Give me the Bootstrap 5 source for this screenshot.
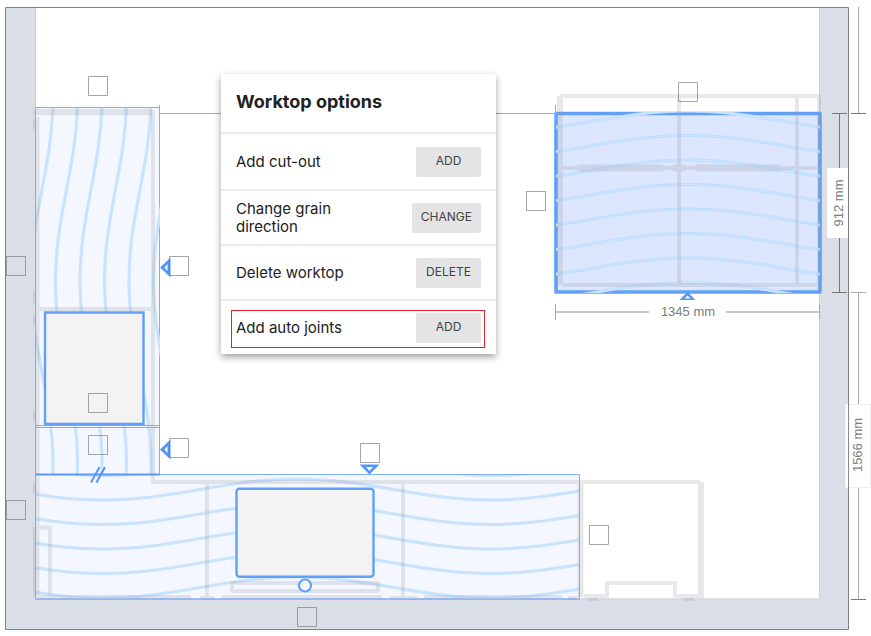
<!DOCTYPE html>
<html lang="en">
<head>
<meta charset="utf-8">
<meta name="viewport" content="width=device-width, initial-scale=1">
<title>Worktop planner</title>
<link rel="stylesheet" href="https://cdn.jsdelivr.net/npm/bootstrap@5.3.0/dist/css/bootstrap.min.css">
<style>
  body { background: #fff; font-family: Inter, "Open Sans", sans-serif; }
  .options-panel { left: 221px; top: 74px; width: 275px; border-radius: 0; box-shadow: 0 3px 7px rgba(0,0,0,.38); color: #212121; }
  .panel-title { font-size: 18px; line-height: 24px; font-weight: 700; padding: 16px 15px 18px; }
  .option-row { border-top: 2px solid #ececec; min-height: 55px; padding: 8px 15px; font-size: 15px; line-height: 18px; }
  .option-row label { max-width: 140px; }
  .option-first { min-height: 57px; }
  .option-marked { padding: 9px 11px 6px 10px; }
  .marked-box { border: 1px solid #e8202c; padding: 2px 3px 4px 4px; }
  .btn-option { background: #e4e4e4; color: #424242; font-size: 12px; line-height: 18px; min-width: 65px; padding: 5px 9px 7px; border: 0; border-radius: 2px; }
  .btn-option:hover { background: #d8d8d8; }
  .plan text { font-family: "Liberation Sans", Arial, sans-serif; font-size: 13px; fill: #7c7c7c; text-anchor: middle; }
  .unit { fill: none; stroke: #969696; stroke-width: 4; stroke-linejoin: round; }
  .top-edge { fill: none; stroke: #82acf7; }
  .grain { fill: none; stroke: #c9e3ff; stroke-width: 3.2; }
  .dim { fill: none; stroke: #aaa; }
  .grip { fill: none; stroke: #777; stroke-opacity: .65; }
  .cutout { fill: #f3f3f3; stroke: #62a0f7; stroke-width: 2.4; }
</style>
</head>
<body>
<main class="position-relative">
  <svg class="plan d-block w-100 h-auto" viewBox="0 0 871 636" role="img" aria-label="Kitchen floor plan">
    <defs>
      <clipPath id="clipLeft"><path d="M36 108H160V474H36z"/></clipPath>
      <clipPath id="clipBase"><path d="M36 475H580V599H36z"/></clipPath>
      <clipPath id="clipIsland"><path d="M556 112H820V293H556z"/></clipPath>
      <path id="waveV" d="M77.5 98C77.5 165 55.5 214 55.5 281S77.5 397 77.5 464S55.5 580 55.5 647"/>
      <path id="waveH" d="M-91 479C-20 479 32 500 103 500S226 479 297 479S421 500 491 500S615 479 685 479"/>
      <path id="waveI" d="M494 156.500C565 156.500 617 135.500 688 135.500S811 156.500 882 156.500"/>
      <g id="islandWaves">
        <use href="#waveI" y="-24.500"/><use href="#waveI"/><use href="#waveI" y="24.500"/><use href="#waveI" y="49"/><use href="#waveI" y="73.500"/><use href="#waveI" y="98"/><use href="#waveI" y="122.500"/><use href="#waveI" y="147"/>
      </g>
      <path id="grip" class="grip" d="M.5 .5H19.500V19.500H.5z"/>
      <g id="arrow"><path d="M0 10L10.500 0V20z" fill="#5596f5"/><path d="M4.500 10L7.500 6.500V13.500z" fill="#fff"/></g>
    </defs>

    <!-- walls -->
    <path d="M5.500 7.500H848.500V629.500H5.500z" fill="#dadfe7"/>
    <path d="M36 8H819V598.500H36z" fill="#fff"/>
    <path d="M35.500 8V599H819.500V8" fill="none" stroke="#cfd2d6"/>

    <!-- worktops -->
    <path class="top-edge" d="M35.500 107.500H159.500V474.500H35.500z" style="fill:#f4f7ff"/>
    <path class="top-edge" d="M35.500 474.500H579.500V599H35.500z" style="fill:#f4f7ff"/>
    <path d="M556 113.500H820V292H556z" fill="#dce6ff"/>

    <g class="grain" clip-path="url(#clipLeft)">
      <use href="#waveV" x="-49"/><use href="#waveV" x="-24.500"/><use href="#waveV"/><use href="#waveV" x="24.500"/><use href="#waveV" x="49"/><use href="#waveV" x="73.500"/><use href="#waveV" x="98"/>
    </g>
    <g class="grain" clip-path="url(#clipBase)">
      <use href="#waveH" y="-24.500"/><use href="#waveH"/><use href="#waveH" y="24.500"/><use href="#waveH" y="49"/><use href="#waveH" y="73.500"/><use href="#waveH" y="98"/>
    </g>
    <path d="M556 113.500H820V292H556z" fill="none" stroke="#62a0f8" stroke-width="3.600" stroke-linejoin="round"/>
    <g clip-path="url(#clipIsland)" fill="none">
      <use href="#islandWaves" stroke="#bddcff" stroke-width="3.200"/>
      <use href="#islandWaves" stroke="#cfe6ff" stroke-width="1.200"/>
    </g>

    <!-- cabinets -->
    <g opacity=".21">
      <path d="M36 109H151V115H36z" fill="#969696"/>
      <path class="unit" d="M37.500 117V596M153 110V482H700M39 309H151M36 527.500H50V597M207 484V597M403 484V597"/>
      <path class="unit" d="M35 111V114M35 119V130M35 291V303M35 315V324M35 411V421M35 484V493M35 527V597M36 597H191M200 598H214M222 597H382M390 598H417M424 597H562M568 598H577"/>
      <path class="unit" style="stroke-width:6" d="M580.500 484V597M701 482V598"/>
      <path class="unit" d="M584 596H607V583H675V596H698M683 599H694M587 599H598"/>
      <path class="unit" d="M232 583H378V591H232z"/>
      <path class="unit" d="M560 96H819V112M679 96V284M797 96V284M563 285H819M563 168H819M819 112V291"/>
      <path class="unit" style="stroke-width:6" d="M560 96V285"/>
      <path class="unit" style="stroke-width:7;stroke-linecap:round" d="M580 168H661M675 168H683M697 168H778"/>
    </g>

    <path class="top-edge" d="M35.500 108V599H579.500V475M36 425.500H160M36 427.500H160"/>
    <path d="M36 474.500H160" stroke="#5b98f5" stroke-width="2"/>
    <path class="cutout" d="M45 312.500H143.500V424H45z"/>
    <rect class="cutout" x="236.500" y="488.700" width="137" height="88" rx="3"/>
    <circle cx="305" cy="585.500" r="6" fill="#f3f6fc" stroke="#62a0f7" stroke-width="2.200"/>
    <path d="M91 482.500L99.500 467M96.500 482.500L105 467" stroke="#5596f5" stroke-width="2"/>

    <use href="#arrow" x="160" y="257.500"/>
    <use href="#arrow" x="160" y="439.500"/>
    <path d="M359.500 464.500H379.500L369.500 474.500z" fill="#5596f5"/><path d="M366 467H373L369.500 471z" fill="#fff"/>
    <path d="M679.500 300L687.500 292L695.500 300z" fill="#5596f5"/><path d="M684.500 298.500H690.500L687.500 295.500z" fill="#fff"/>

    <!-- room outline and dimension lines -->
    <path d="M5.500 7.500H848.500V629.500H5.500z" fill="none" stroke="#7d8087" stroke-width="1"/>
    <path class="dim" d="M160 113.500H555M159.500 105V121M555.500 105V121M555.500 304V320M819.500 304V319M858.500 7V113M858.500 292V599M851 292.500H866"/>
    <path d="M556 312H649M726 312H819" stroke="#b8b8b8" stroke-width="1.600"/>
    <path d="M839.500 113V292M832 113.500H847M832 292.500H847M851 113.500H866M851 599.500H866" fill="none" stroke="#777"/>
    <path d="M827 168H848V238H827z" fill="#fff"/>
    <path d="M845.500 404.500H870.500V487.500H845.500z" fill="#fff" stroke="#eee"/>
    <path d="M848.500 404V488" stroke="#8a8a8a"/>
    <text x="688" y="316">1345 mm</text>
    <text transform="translate(843 203) rotate(-90)">912 mm</text>
    <text transform="translate(862 445) rotate(-90)">1566 mm</text>

    <!-- handles -->
    <use href="#grip" x="88" y="76"/><use href="#grip" x="6" y="256"/><use href="#grip" x="169" y="256"/>
    <use href="#grip" x="88" y="393"/><use href="#grip" x="88" y="435"/><use href="#grip" x="169" y="438"/>
    <use href="#grip" x="6" y="500"/><use href="#grip" x="360" y="443"/><use href="#grip" x="297" y="607"/>
    <use href="#grip" x="589" y="525"/><use href="#grip" x="526" y="191"/><use href="#grip" x="678" y="82"/>
  </svg>

  <section class="options-panel position-absolute bg-white" aria-labelledby="panelTitle">
    <h2 class="panel-title m-0" id="panelTitle">Worktop options</h2>
    <div class="option-row option-first d-flex align-items-center justify-content-between">
      <label for="addCutout">Add cut-out</label>
      <button class="btn btn-option" id="addCutout" type="button">ADD</button>
    </div>
    <div class="option-row d-flex align-items-center justify-content-between">
      <label for="changeGrain">Change grain direction</label>
      <button class="btn btn-option" id="changeGrain" type="button">CHANGE</button>
    </div>
    <div class="option-row d-flex align-items-center justify-content-between">
      <label for="deleteTop">Delete worktop</label>
      <button class="btn btn-option" id="deleteTop" type="button">DELETE</button>
    </div>
    <div class="option-row option-marked">
      <div class="marked-box d-flex align-items-center justify-content-between">
        <label for="addJoints">Add auto joints</label>
        <button class="btn btn-option" id="addJoints" type="button">ADD</button>
      </div>
    </div>
  </section>
</main>
<script src="https://cdn.jsdelivr.net/npm/bootstrap@5.3.0/dist/js/bootstrap.bundle.min.js"></script>
</body>
</html>
